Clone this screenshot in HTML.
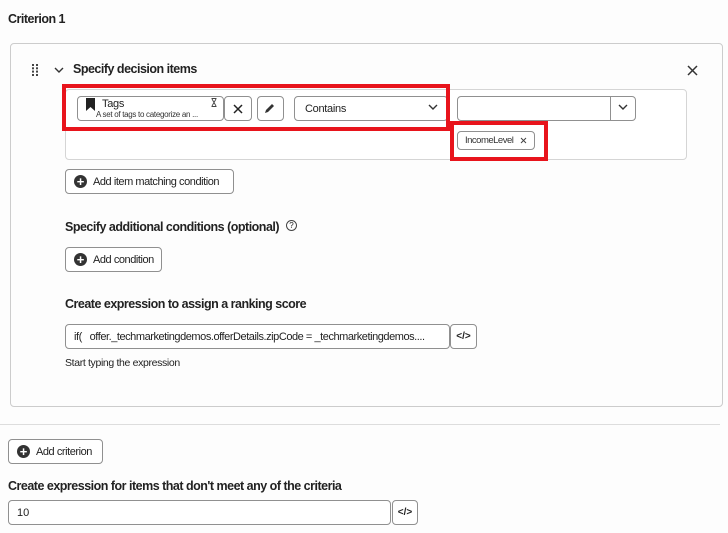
<!DOCTYPE html>
<html><head><style>
body{margin:0;width:728px;height:533px;background:#fdfdfd;font-family:"Liberation Sans",sans-serif;color:#222;position:relative;overflow:hidden}
.a{position:absolute;white-space:nowrap}
.b{font-weight:bold;font-size:12.5px;letter-spacing:-0.5px}
.box{position:absolute;border:1px solid #909090;border-radius:4px;background:#fff;box-sizing:border-box;white-space:nowrap}
.btn{position:absolute;border:1px solid #909090;border-radius:4px;background:#fff;box-sizing:border-box;font-size:11px;display:flex;align-items:center;letter-spacing:-0.45px;white-space:nowrap}
.plus{width:13px;height:13px;border-radius:50%;background:#333;color:#fff;font-size:13px;line-height:13px;text-align:center;font-weight:bold;margin:0 6px 0 8px;letter-spacing:0}
.red{position:absolute;border:4px solid #e8141c;box-sizing:border-box}
</style></head><body>
<div class="a b" style="left:8px;top:12px">Criterion 1</div>
<div class="a" style="left:10px;top:43px;width:713px;height:364px;border:1px solid #ccc;border-radius:4px;box-sizing:border-box"></div>
<svg class="a" style="left:32px;top:64px" width="7" height="12"><g fill="#444"><rect x="0" y="0" width="2" height="2"/><rect x="4" y="0" width="2" height="2"/><rect x="0" y="3.3" width="2" height="2"/><rect x="4" y="3.3" width="2" height="2"/><rect x="0" y="6.6" width="2" height="2"/><rect x="4" y="6.6" width="2" height="2"/><rect x="0" y="10" width="2" height="2"/><rect x="4" y="10" width="2" height="2"/></g></svg>
<svg class="a" style="left:54px;top:66px" width="10" height="8"><path d="M1 2l4 4 4-4" stroke="#333" stroke-width="1.4" fill="none"/></svg>
<div class="a b" style="left:73px;top:62px">Specify decision items</div>
<svg class="a" style="left:687px;top:65px" width="11" height="11"><path d="M1 1l9 9M10 1l-9 9" stroke="#333" stroke-width="1.5"/></svg>
<div class="a" style="left:65px;top:89px;width:622px;height:71px;border:1px solid #d5d5d5;border-radius:4px;box-sizing:border-box;background:#fff"></div>
<div class="box" style="left:77px;top:96px;width:147px;height:25px"></div>
<svg class="a" style="left:86px;top:98px" width="9" height="13"><path d="M0 0h9v13l-4.5-4-4.5 4z" fill="#222"/></svg>
<div class="a" style="left:102px;top:98px;font-size:11px;letter-spacing:-0.3px">Tags</div>
<div class="a" style="left:96px;top:110px;font-size:8px;color:#333;letter-spacing:-0.3px">A set of tags to categorize an ...</div>
<svg class="a" style="left:211px;top:98px" width="6" height="9"><path d="M0.5 0.5h5M0.5 8.5h5M1 1l4 7M5 1l-4 7" stroke="#444" stroke-width="0.9" fill="none"/></svg>
<div class="box" style="left:224px;top:96px;width:28px;height:25px"></div>
<svg class="a" style="left:233px;top:104px" width="10" height="10"><path d="M1 1l8 8M9 1l-8 8" stroke="#222" stroke-width="1.5"/></svg>
<div class="box" style="left:257px;top:96px;width:27px;height:25px"></div>
<svg class="a" style="left:264px;top:102px" width="12" height="12"><path d="M1 11l1-3 6-6 2 2-6 6z" fill="#333"/></svg>
<div class="box" style="left:294px;top:96px;width:154px;height:25px;font-size:11px;padding:6px 10px;letter-spacing:-0.3px">Contains</div>
<svg class="a" style="left:428px;top:104px" width="10" height="7"><path d="M1 1l4 4 4-4" stroke="#333" stroke-width="1.4" fill="none"/></svg>
<div class="box" style="left:457px;top:96px;width:179px;height:25px"></div>
<div class="a" style="left:610px;top:97px;width:1px;height:23px;background:#909090"></div>
<svg class="a" style="left:618px;top:104px" width="10" height="7"><path d="M1 1l4 4 4-4" stroke="#333" stroke-width="1.4" fill="none"/></svg>
<div class="box" style="left:457px;top:131px;width:78px;height:19px;font-size:9.5px;padding:3px 0 0 7px;color:#333;letter-spacing:-0.5px">IncomeLevel</div>
<svg class="a" style="left:520px;top:137px" width="7" height="7"><path d="M1 1l5 5M6 1l-5 5" stroke="#444" stroke-width="1"/></svg>
<div class="red" style="left:62px;top:84px;width:388px;height:47px"></div>
<div class="red" style="left:450px;top:121px;width:98px;height:40px"></div>
<div class="btn" style="left:65px;top:169px;width:169px;height:25px"><span class="plus">+</span>Add item matching condition</div>
<div class="a b" style="left:65px;top:220px">Specify additional conditions (optional)</div>
<div class="a" style="left:286px;top:220px;width:9px;height:9px;border:1px solid #444;border-radius:50%;font-size:8px;text-align:center;line-height:9px">?</div>
<div class="btn" style="left:65px;top:247px;width:97px;height:25px"><span class="plus">+</span>Add condition</div>
<div class="a b" style="left:65px;top:297px">Create expression to assign a ranking score</div>
<div class="box" style="left:65px;top:324px;width:385px;height:25px;font-size:11px;padding:6px 8px;overflow:hidden;letter-spacing:-0.45px">if(&nbsp;&nbsp;&nbsp;offer._techmarketingdemos.offerDetails.zipCode = _techmarketingdemos....</div>
<div class="box" style="left:450px;top:324px;width:27px;height:25px;font-size:10px;text-align:center;line-height:23px;font-weight:bold">&lt;/&gt;</div>
<div class="a" style="left:65px;top:357px;font-size:10.5px;letter-spacing:-0.35px">Start typing the expression</div>
<div class="a" style="left:0;top:424px;width:720px;height:1px;background:#ddd"></div>
<div class="btn" style="left:8px;top:439px;width:95px;height:25px"><span class="plus">+</span>Add criterion</div>
<div class="a b" style="left:8px;top:479px">Create expression for items that don't meet any of the criteria</div>
<div class="box" style="left:8px;top:500px;width:383px;height:25px;font-size:11px;padding:6px 8px">10</div>
<div class="box" style="left:392px;top:500px;width:26px;height:25px;font-size:10px;text-align:center;line-height:23px;font-weight:bold">&lt;/&gt;</div>
</body></html>
